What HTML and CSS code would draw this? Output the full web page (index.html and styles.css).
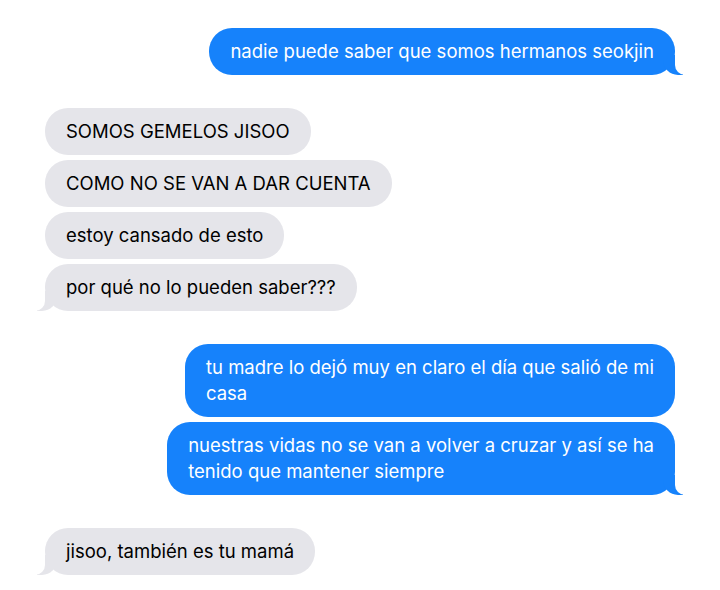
FILE: index.html
```html
<!DOCTYPE html>
<html lang="es">
<head>
    <meta charset="UTF-8">
    <meta name="viewport" content="width=device-width, initial-scale=1.0">
    <title>Mensajes</title>
    <link rel="stylesheet" href="styles.css">
</head>
<body>

    <div class="chat">
        <div class="group sent">
            <p class="bubble tail">nadie puede saber que somos hermanos seokjin</p>
        </div>

        <div class="group received">
            <p class="bubble">SOMOS GEMELOS JISOO</p>
            <p class="bubble">COMO NO SE VAN A DAR CUENTA</p>
            <p class="bubble">estoy cansado de esto</p>
            <p class="bubble tail">por qué no lo pueden saber???</p>
        </div>

        <div class="group sent">
            <p class="bubble">tu madre lo dejó muy en claro el día que salió de mi<br>casa</p>
            <p class="bubble tail">nuestras vidas no se van a volver a cruzar y así se ha<br>tenido que mantener siempre</p>
        </div>

        <div class="group received">
            <p class="bubble tail">jisoo, también es tu mamá</p>
        </div>
    </div>

</body>
</html>
```

FILE: styles.css
```css
body { margin: 0; background: #ffffff; font-family: Inter, "Noto Sans", Arial, sans-serif; }
.chat { display: flex; flex-direction: column; gap: 33px; padding: 28px 45px; }
.group { display: flex; flex-direction: column; gap: 5px; }
.group.sent { align-items: flex-end; }
.group.received { align-items: flex-start; }

.bubble { position: relative; margin: 0; max-width: 540px; padding: 10px 21px 11px; border-radius: 23px; font-size: 18.5px; line-height: 26px; }
.sent .bubble { background: #1682fb; color: #ffffff; }
.received .bubble { background: #e5e5ea; color: #000000; }

/* little tail on the last bubble of a group */
.bubble.tail::before, .bubble.tail::after { content: ""; position: absolute; bottom: 0; height: 20px; }
.sent .bubble.tail::before { right: -8px; width: 20px; background: #1682fb; border-bottom-left-radius: 15px; }
.sent .bubble.tail::after { right: -10px; width: 10px; background: #ffffff; border-bottom-left-radius: 10px; }
.received .bubble.tail::before { left: -8px; width: 20px; background: #e5e5ea; border-bottom-right-radius: 15px; }
.received .bubble.tail::after { left: -10px; width: 10px; background: #ffffff; border-bottom-right-radius: 10px; }
```
